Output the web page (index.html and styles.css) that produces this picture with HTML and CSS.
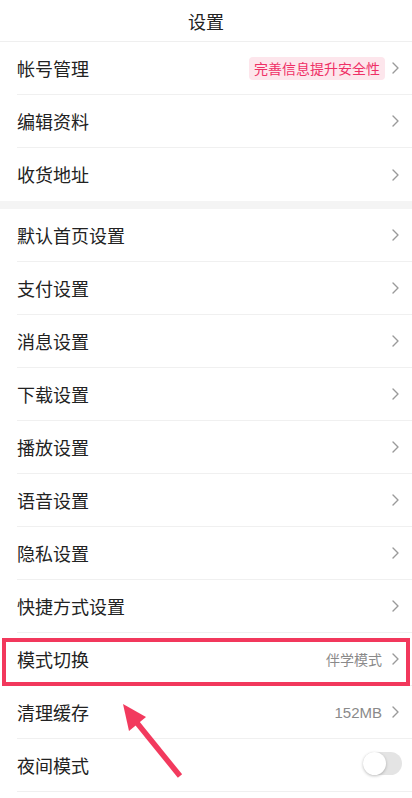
FILE: index.html
```html
<!DOCTYPE html>
<html lang="zh-CN">
<head>
<meta charset="utf-8">
<title>设置</title>
<link rel="stylesheet" href="styles.css">
</head>
<body>
<div class="page">
  <header class="topbar">设置</header>

  <section class="group">
    <div class="row">
      <span class="label">帐号管理</span>
      <span class="right"><span class="badge">完善信息提升安全性</span><svg class="chev" viewBox="0 0 7 12"><polyline points="1,1 6,6 1,11"/></svg></span>
    </div>
    <div class="row">
      <span class="label">编辑资料</span>
      <span class="right"><svg class="chev" viewBox="0 0 7 12"><polyline points="1,1 6,6 1,11"/></svg></span>
    </div>
    <div class="row last">
      <span class="label">收货地址</span>
      <span class="right"><svg class="chev" viewBox="0 0 7 12"><polyline points="1,1 6,6 1,11"/></svg></span>
    </div>
  </section>

  <div class="band"></div>

  <section class="group">
    <div class="row">
      <span class="label">默认首页设置</span>
      <span class="right"><svg class="chev" viewBox="0 0 7 12"><polyline points="1,1 6,6 1,11"/></svg></span>
    </div>
    <div class="row">
      <span class="label">支付设置</span>
      <span class="right"><svg class="chev" viewBox="0 0 7 12"><polyline points="1,1 6,6 1,11"/></svg></span>
    </div>
    <div class="row">
      <span class="label">消息设置</span>
      <span class="right"><svg class="chev" viewBox="0 0 7 12"><polyline points="1,1 6,6 1,11"/></svg></span>
    </div>
    <div class="row">
      <span class="label">下载设置</span>
      <span class="right"><svg class="chev" viewBox="0 0 7 12"><polyline points="1,1 6,6 1,11"/></svg></span>
    </div>
    <div class="row">
      <span class="label">播放设置</span>
      <span class="right"><svg class="chev" viewBox="0 0 7 12"><polyline points="1,1 6,6 1,11"/></svg></span>
    </div>
    <div class="row">
      <span class="label">语音设置</span>
      <span class="right"><svg class="chev" viewBox="0 0 7 12"><polyline points="1,1 6,6 1,11"/></svg></span>
    </div>
    <div class="row">
      <span class="label">隐私设置</span>
      <span class="right"><svg class="chev" viewBox="0 0 7 12"><polyline points="1,1 6,6 1,11"/></svg></span>
    </div>
    <div class="row">
      <span class="label">快捷方式设置</span>
      <span class="right"><svg class="chev" viewBox="0 0 7 12"><polyline points="1,1 6,6 1,11"/></svg></span>
    </div>
    <div class="row highlighted">
      <span class="label">模式切换</span>
      <span class="right"><span class="value">伴学模式</span><svg class="chev" viewBox="0 0 7 12"><polyline points="1,1 6,6 1,11"/></svg></span>
      <span class="redbox"></span>
    </div>
    <div class="row">
      <span class="label">清理缓存</span>
      <span class="right"><span class="value num">152MB</span><svg class="chev" viewBox="0 0 7 12"><polyline points="1,1 6,6 1,11"/></svg></span>
    </div>
    <div class="row">
      <span class="label">夜间模式</span>
      <span class="right"><span class="toggle"><span class="knob"></span></span></span>
    </div>
  </section>

  <svg class="arrow" viewBox="0 0 80 90" width="80" height="90">
    <line x1="63" y1="76" x2="16" y2="18" />
    <polygon points="6,4 29,17 12,31" />
  </svg>
</div>
</body>
</html>
```

FILE: styles.css
```css
html, body {
  margin: 0;
  padding: 0;
  background: #ffffff;
}

body {
  font-family: "Noto Sans CJK SC", "Noto Sans", "Liberation Sans", sans-serif;
  color: #222222;
  overflow: hidden;
}

.page {
  position: relative;
  width: 412px;
  height: 798px;
  overflow: hidden;
  background: #ffffff;
}

.topbar {
  height: 41px;
  display: flex;
  align-items: center;
  justify-content: center;
  font-size: 18px;
  color: #222222;
  border-bottom: 1px solid #efefef;
}

.group {
  display: flex;
  flex-direction: column;
  padding-left: 17px;
}

.row {
  position: relative;
  height: 52px;
  display: flex;
  align-items: center;
  justify-content: space-between;
  padding-right: 13px;
  border-bottom: 1px solid #f0f0f0;
}

.row.last {
  border-bottom: none;
  height: 53px;
}

.label {
  font-size: 18px;
  color: #222222;
  line-height: 1;
  margin-top: -1px;
}

.right {
  display: flex;
  align-items: center;
  gap: 9px;
}

.chev {
  width: 7px;
  height: 12px;
  display: block;
}

.chev polyline {
  fill: none;
  stroke: #9a9a9a;
  stroke-width: 1.4;
  stroke-linecap: round;
  stroke-linejoin: round;
}

.badge {
  display: inline-flex;
  align-items: center;
  height: 23px;
  padding: 0 5px;
  border-radius: 4px;
  background: #fde6ec;
  color: #ef2f66;
  font-size: 14px;
  margin-right: -2px;
}

.value {
  font-size: 14px;
  color: #8a8a8a;
  margin-right: 1px;
}

.value.num {
  font-family: "Liberation Sans", "Noto Sans", sans-serif;
  font-size: 15px;
}

.band {
  height: 8px;
  background: #f4f4f4;
}

.redbox {
  position: absolute;
  left: -15px;
  right: 2px;
  top: 5px;
  bottom: -1px;
  border: 4px solid #f2385c;
  pointer-events: none;
}

.toggle {
  position: relative;
  display: block;
  width: 39px;
  height: 23px;
  border-radius: 12px;
  background: #e4e4e4;
  margin-right: -3px;
  margin-top: -4px;
}

.knob {
  position: absolute;
  left: 0;
  top: 0;
  width: 23px;
  height: 23px;
  border-radius: 50%;
  background: #ffffff;
  box-shadow: 0 1px 3px rgba(0, 0, 0, 0.25);
}

.arrow {
  position: absolute;
  left: 117px;
  top: 700px;
  overflow: visible;
}

.arrow line {
  stroke: #f23a5e;
  stroke-width: 5.5;
  stroke-linecap: butt;
}

.arrow polygon {
  fill: #f23a5e;
}
```
